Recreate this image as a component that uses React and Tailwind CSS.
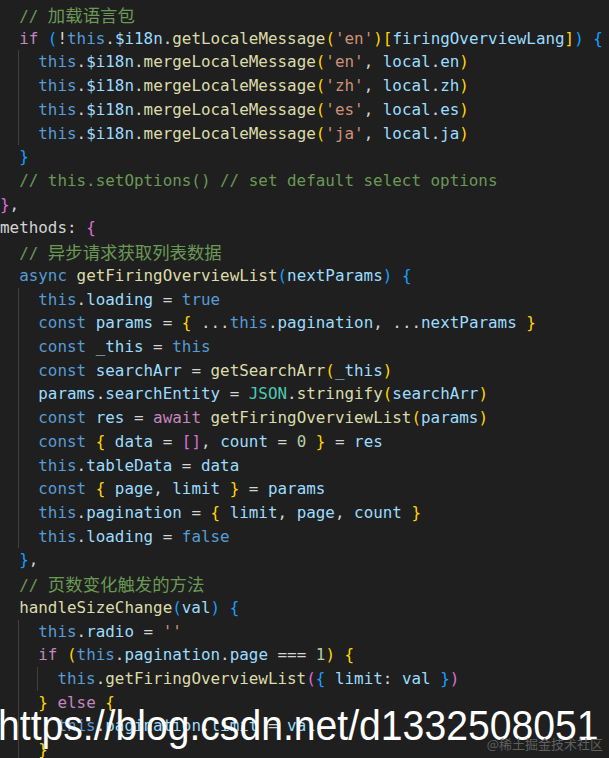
const C = {
  kw: 'text-[#569cd6]',
  ctl: 'text-[#c586c0]',
  fn: 'text-[#dcdcaa]',
  v: 'text-[#9cdcfe]',
  cst: 'text-[#4fc1ff]',
  str: 'text-[#ce9178]',
  num: 'text-[#b5cea8]',
  cm: 'text-[#6a9955]',
  p: 'text-[#d4d4d4]',
  b1: 'text-[#ffd700]',
  b2: 'text-[#da70d6]',
  b3: 'text-[#179fff]',
  cls: 'text-[#4ec9b0]',
}

// [indent, tokens]; token = [text, color] or [text, color, true] for CJK
const merge = (lang) => [
  2,
  [
    ['this', 'kw'], ['.', 'p'], ['$i18n', 'v'], ['.', 'p'], ['mergeLocaleMessage', 'fn'],
    ['(', 'b1'], [`'${lang}'`, 'str'], [', ', 'p'], ['local', 'v'], ['.', 'p'], [lang, 'v'], [')', 'b1'],
  ],
]

const lines = [
  [1, [['this', 'kw'], ['.', 'p'], ['getFiringOverviewList', 'fn'], ['()', 'b3']]],
  [1, [['// ', 'cm'], ['加载语言包', 'cm', true]]],
  [1, [
    ['if', 'ctl'], [' ', 'p'], ['(', 'b3'], ['!', 'p'], ['this', 'kw'], ['.', 'p'], ['$i18n', 'v'], ['.', 'p'],
    ['getLocaleMessage', 'fn'], ['(', 'b1'], ["'en'", 'str'], [')', 'b1'], ['[', 'b1'],
    ['firingOverviewLang', 'v'], [']', 'b1'], [')', 'b3'], [' ', 'p'], ['{', 'b3'],
  ]],
  merge('en'),
  merge('zh'),
  merge('es'),
  merge('ja'),
  [1, [['}', 'b3']]],
  [1, [['// this.setOptions() // set default select options', 'cm']]],
  [0, [['}', 'b2'], [',', 'p']]],
  [0, [['methods', 'p'], [': ', 'p'], ['{', 'b2']]],
  [1, [['// ', 'cm'], ['异步请求获取列表数据', 'cm', true]]],
  [1, [['async', 'kw'], [' ', 'p'], ['getFiringOverviewList', 'fn'], ['(', 'b3'], ['nextParams', 'v'], [')', 'b3'], [' ', 'p'], ['{', 'b3']]],
  [2, [['this', 'kw'], ['.', 'p'], ['loading', 'v'], [' = ', 'p'], ['true', 'kw']]],
  [2, [
    ['const', 'kw'], [' ', 'p'], ['params', 'v'], [' = ', 'p'], ['{', 'b1'], [' ...', 'p'], ['this', 'kw'], ['.', 'p'],
    ['pagination', 'v'], [', ...', 'p'], ['nextParams', 'v'], [' ', 'p'], ['}', 'b1'],
  ]],
  [2, [['const', 'kw'], [' ', 'p'], ['_this', 'v'], [' = ', 'p'], ['this', 'kw']]],
  [2, [['const', 'kw'], [' ', 'p'], ['searchArr', 'v'], [' = ', 'p'], ['getSearchArr', 'fn'], ['(', 'b1'], ['_this', 'v'], [')', 'b1']]],
  [2, [
    ['params', 'v'], ['.', 'p'], ['searchEntity', 'v'], [' = ', 'p'], ['JSON', 'cls'], ['.', 'p'],
    ['stringify', 'fn'], ['(', 'b1'], ['searchArr', 'v'], [')', 'b1'],
  ]],
  [2, [
    ['const', 'kw'], [' ', 'p'], ['res', 'v'], [' = ', 'p'], ['await', 'ctl'], [' ', 'p'],
    ['getFiringOverviewList', 'fn'], ['(', 'b1'], ['params', 'v'], [')', 'b1'],
  ]],
  [2, [
    ['const', 'kw'], [' ', 'p'], ['{', 'b1'], [' ', 'p'], ['data', 'v'], [' = ', 'p'], ['[]', 'b2'], [', ', 'p'],
    ['count', 'v'], [' = ', 'p'], ['0', 'num'], [' ', 'p'], ['}', 'b1'], [' = ', 'p'], ['res', 'v'],
  ]],
  [2, [['this', 'kw'], ['.', 'p'], ['tableData', 'v'], [' = ', 'p'], ['data', 'v']]],
  [2, [
    ['const', 'kw'], [' ', 'p'], ['{', 'b1'], [' ', 'p'], ['page', 'v'], [', ', 'p'], ['limit', 'v'], [' ', 'p'],
    ['}', 'b1'], [' = ', 'p'], ['params', 'v'],
  ]],
  [2, [
    ['this', 'kw'], ['.', 'p'], ['pagination', 'v'], [' = ', 'p'], ['{', 'b1'], [' ', 'p'], ['limit', 'v'], [', ', 'p'],
    ['page', 'v'], [', ', 'p'], ['count', 'v'], [' ', 'p'], ['}', 'b1'],
  ]],
  [2, [['this', 'kw'], ['.', 'p'], ['loading', 'v'], [' = ', 'p'], ['false', 'kw']]],
  [1, [['}', 'b3'], [',', 'p']]],
  [1, [['// ', 'cm'], ['页数变化触发的方法', 'cm', true]]],
  [1, [['handleSizeChange', 'fn'], ['(', 'b3'], ['val', 'v'], [')', 'b3'], [' ', 'p'], ['{', 'b3']]],
  [2, [['this', 'kw'], ['.', 'p'], ['radio', 'v'], [' = ', 'p'], ["''", 'str']]],
  [2, [
    ['if', 'ctl'], [' ', 'p'], ['(', 'b1'], ['this', 'kw'], ['.', 'p'], ['pagination', 'v'], ['.', 'p'], ['page', 'v'],
    [' === ', 'p'], ['1', 'num'], [')', 'b1'], [' ', 'p'], ['{', 'b1'],
  ]],
  [3, [
    ['this', 'kw'], ['.', 'p'], ['getFiringOverviewList', 'fn'], ['(', 'b2'], ['{', 'b3'], [' ', 'p'], ['limit', 'v'],
    [': ', 'p'], ['val', 'v'], [' ', 'p'], ['}', 'b3'], [')', 'b2'],
  ]],
  [2, [['}', 'b1'], [' ', 'p'], ['else', 'ctl'], [' ', 'p'], ['{', 'b1']]],
  [3, [['this', 'kw'], ['.', 'p'], ['pagination', 'v'], ['.', 'p'], ['limit', 'v'], [' = ', 'p'], ['val', 'v']]],
  [2, [['}', 'b1']]],
]

function Indent({ level }) {
  if (level === 0) return null
  const guides = []
  for (let i = 1; i < level; i++) {
    guides.push(<span key={i} className="w-[19.15px] shrink-0 border-l border-[#404040]" />)
  }
  return (
    <>
      <span className="w-[17.5px] shrink-0" />
      {guides}
      <span className="w-[1.65px] shrink-0" />
    </>
  )
}

function CodeLine({ indent, tokens }) {
  return (
    <div className="flex h-[23.73px]">
      <Indent level={indent} />
      <span className="whitespace-pre">
        {tokens.map(([text, color, cjk], i) => (
          <span
            key={i}
            className={`${C[color]} ${cjk ? "text-[17.4px] font-['Noto_Sans_CJK_SC',sans-serif]" : ''}`}
          >
            {text}
          </span>
        ))}
      </span>
    </div>
  )
}

export default function App() {
  return (
    <div className="relative h-[758px] w-[609px] overflow-hidden bg-[#1f1f1f]">
      <div className="mt-[-20.8px] font-['DejaVu_Sans_Mono','Noto_Sans_CJK_SC',monospace] text-[15.9px] leading-[23.73px] text-[#d4d4d4]">
        {lines.map(([indent, tokens], i) => (
          <CodeLine key={i} indent={indent} tokens={tokens} />
        ))}
      </div>

      {/* watermarks */}
      <div className="absolute left-[-2px] top-[704px] origin-left scale-x-[0.91] whitespace-nowrap font-['Liberation_Sans',Arial,sans-serif] text-[43px] leading-none text-white">
        https://blog.csdn.net/d1332508051
      </div>
      <div className="absolute right-[6px] top-[737px] whitespace-nowrap font-['Noto_Sans_CJK_SC',sans-serif] text-[13px] leading-none text-[#5f5f5f]">
        @稀土掘金技术社区
      </div>
    </div>
  )
}
